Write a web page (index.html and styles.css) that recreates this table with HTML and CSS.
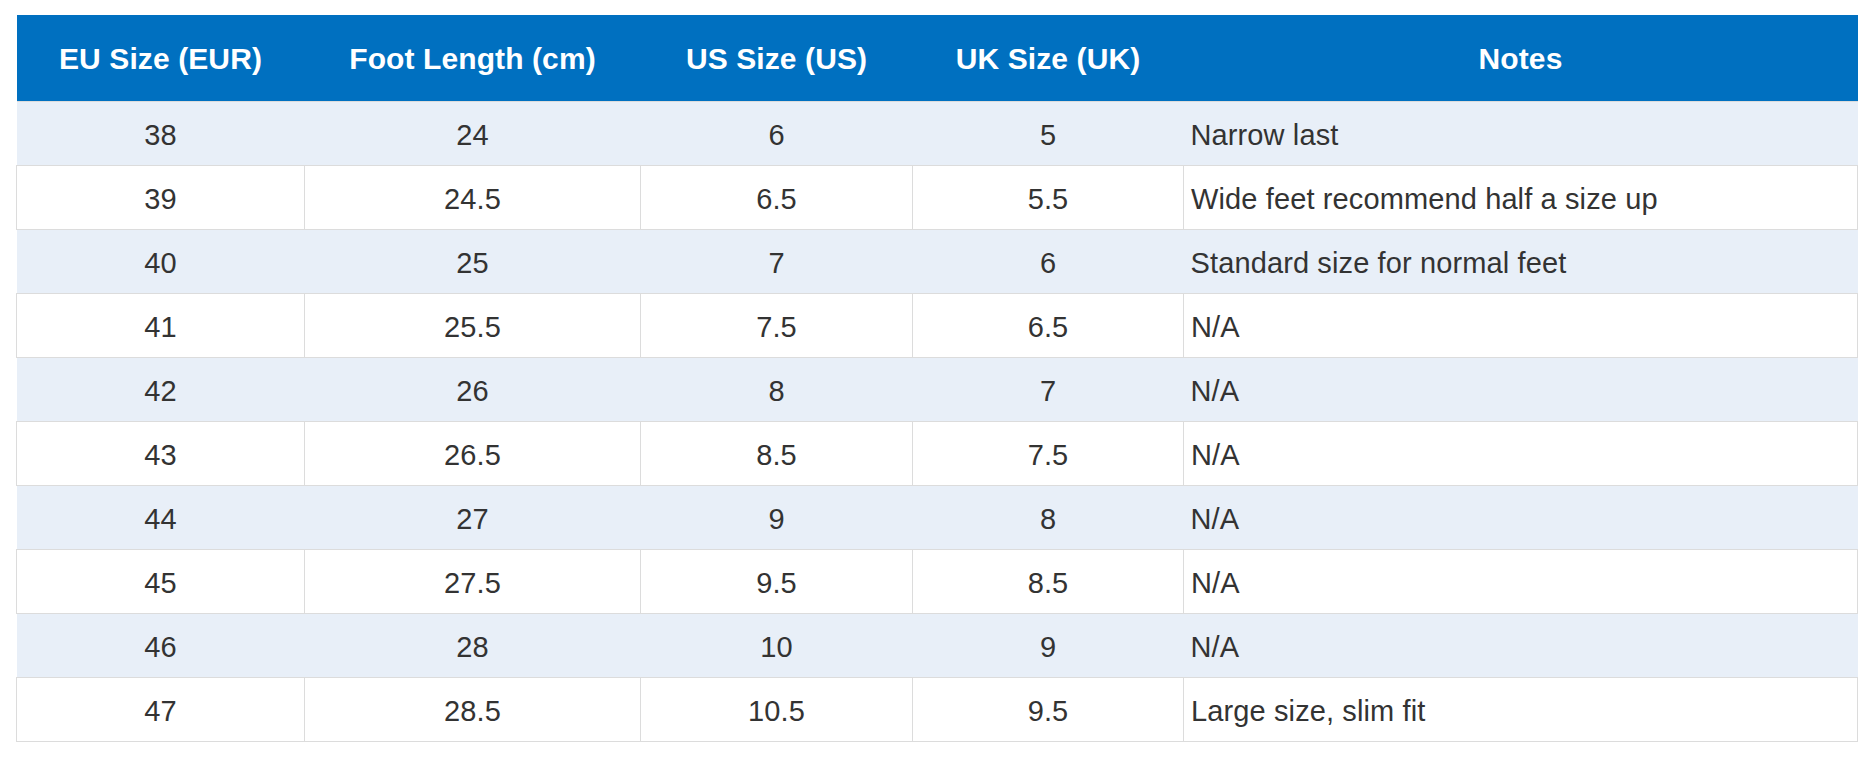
FILE: index.html
```html
<!DOCTYPE html>
<html lang="en">
<head>
<meta charset="utf-8">
<title>Shoe Size Chart</title>
<link rel="stylesheet" href="styles.css">
</head>
<body>
<div class="page">
<table class="size-table">
  <colgroup>
    <col class="c-eu">
    <col class="c-foot">
    <col class="c-us">
    <col class="c-uk">
    <col class="c-notes">
  </colgroup>
  <thead>
    <tr>
      <th>EU Size (EUR)</th>
      <th>Foot Length (cm)</th>
      <th>US Size (US)</th>
      <th>UK Size (UK)</th>
      <th>Notes</th>
    </tr>
  </thead>
  <tbody>
    <tr class="alt"><td>38</td><td>24</td><td>6</td><td>5</td><td class="note">Narrow last</td></tr>
    <tr><td>39</td><td>24.5</td><td>6.5</td><td>5.5</td><td class="note">Wide feet recommend half a size up</td></tr>
    <tr class="alt"><td>40</td><td>25</td><td>7</td><td>6</td><td class="note">Standard size for normal feet</td></tr>
    <tr><td>41</td><td>25.5</td><td>7.5</td><td>6.5</td><td class="note">N/A</td></tr>
    <tr class="alt"><td>42</td><td>26</td><td>8</td><td>7</td><td class="note">N/A</td></tr>
    <tr><td>43</td><td>26.5</td><td>8.5</td><td>7.5</td><td class="note">N/A</td></tr>
    <tr class="alt"><td>44</td><td>27</td><td>9</td><td>8</td><td class="note">N/A</td></tr>
    <tr><td>45</td><td>27.5</td><td>9.5</td><td>8.5</td><td class="note">N/A</td></tr>
    <tr class="alt"><td>46</td><td>28</td><td>10</td><td>9</td><td class="note">N/A</td></tr>
    <tr><td>47</td><td>28.5</td><td>10.5</td><td>9.5</td><td class="note">Large size, slim fit</td></tr>
  </tbody>
</table>
</div>
</body>
</html>
```
FILE: styles.css
```css
html, body {
  margin: 0;
  padding: 0;
  background: #ffffff;
}

.page {
  padding: 15px 15px 0 16px;
  font-family: "Liberation Sans", Arial, sans-serif;
  color: #333333;
}

.size-table {
  width: 1841px;
  border-collapse: collapse;
  table-layout: fixed;
  font-size: 29px;
  letter-spacing: 0.12px;
}

.c-eu { width: 288px; }
.c-foot { width: 336px; }
.c-us { width: 272px; }
.c-uk { width: 271px; }
.c-notes { width: 674px; }

.size-table th {
  background: #0070c0;
  color: #ffffff;
  font-weight: bold;
  font-size: 30px;
  letter-spacing: 0.1px;
  height: 85px;
  padding: 1px 0 0;
  text-align: center;
  vertical-align: middle;
  border: none;
}

.size-table td {
  height: 60px;
  padding: 3px 0 0;
  text-align: center;
  vertical-align: middle;
  border: 1px solid #dcdcdc;
  background: #ffffff;
  white-space: nowrap;
}

.size-table tr.alt td {
  background: #e8eff8;
  border-left: none;
  border-right: none;
}

.size-table td.note {
  text-align: left;
  padding-left: 7px;
}
```
